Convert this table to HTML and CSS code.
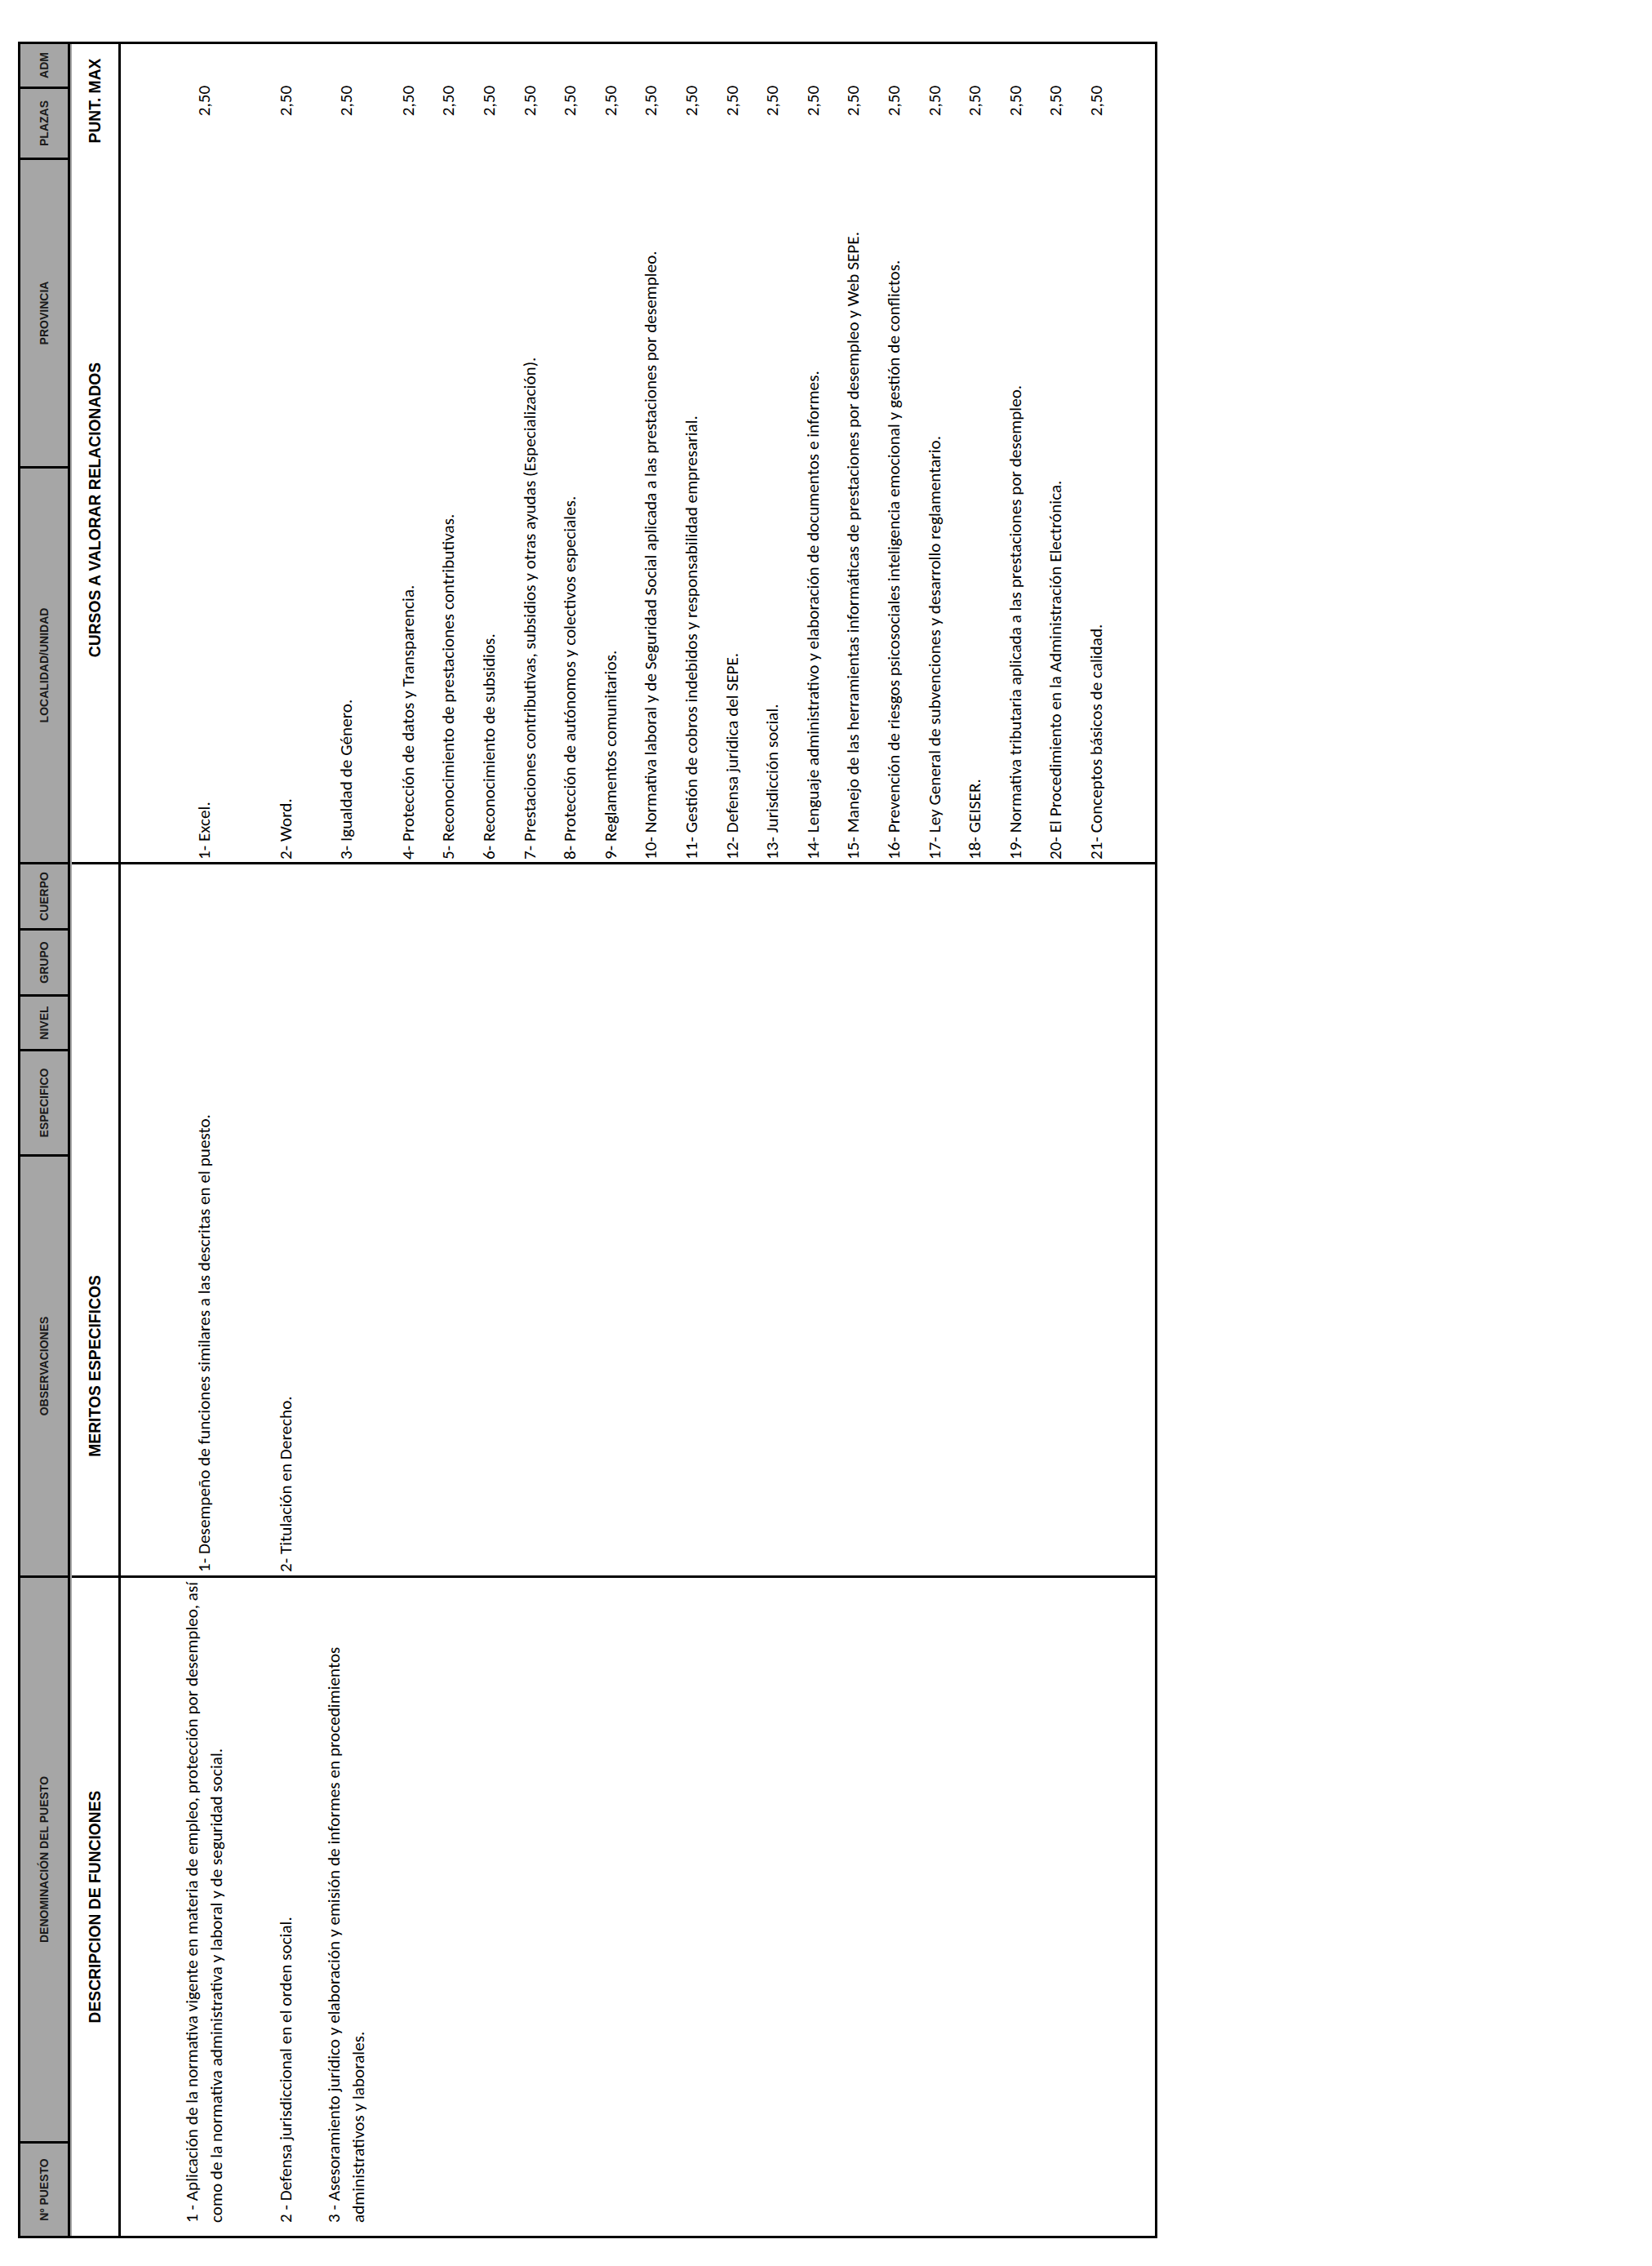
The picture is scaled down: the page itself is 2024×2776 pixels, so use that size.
FILE: index.html
```html
<!DOCTYPE html>
<html lang="es">
<head>
<meta charset="utf-8">
<title>Descripción de funciones</title>
<link rel="stylesheet" href="styles.css">
</head>
<body>
<div class="page">
<div class="sheet">
  <div class="hdr">
    <div class="hc c-num">Nº PUESTO</div>
    <div class="hc c-den">DENOMINACIÓN DEL PUESTO</div>
    <div class="hc c-obs">OBSERVACIONES</div>
    <div class="hc c-esp">ESPECIFICO</div>
    <div class="hc c-niv">NIVEL</div>
    <div class="hc c-gru">GRUPO</div>
    <div class="hc c-cue">CUERPO</div>
    <div class="hc c-loc">LOCALIDAD/UNIDAD</div>
    <div class="hc c-pro">PROVINCIA</div>
    <div class="hc c-pla">PLAZAS</div>
    <div class="hc c-adm">ADM</div>
  </div>
  <div class="titles">
    <div class="tc ta">DESCRIPCION DE FUNCIONES</div>
    <div class="tc tb">MERITOS ESPECIFICOS</div>
    <div class="tc tcur">CURSOS A VALORAR RELACIONADOS</div>
    <div class="tc td">PUNT. MAX</div>
  </div>
  <div class="rows">
    <div class="cell ca first"><div class="multi">1 - Aplicación de la normativa vigente en materia de empleo, protección por desempleo, así<br>como de la normativa administrativa y laboral y de seguridad social.</div></div>
    <div class="cell cb first">1- Desempeño de funciones similares a las descritas en el puesto.</div>
    <div class="cell cc first">1- Excel.</div>
    <div class="cell cd first">2,50</div>

    <div class="cell ca">2 - Defensa jurisdiccional en el orden social.</div>
    <div class="cell cb">2- Titulación en Derecho.</div>
    <div class="cell cc">2- Word.</div>
    <div class="cell cd">2,50</div>

    <div class="cell ca"><div class="multi">3 - Asesoramiento jurídico y elaboración y emisión de informes en procedimientos<br>administrativos y laborales.</div></div>
    <div class="cell cb"></div>
    <div class="cell cc">3- Igualdad de Género.</div>
    <div class="cell cd">2,50</div>

    <div class="cell ca"></div><div class="cell cb"></div>
    <div class="cell cc">4- Protección de datos y Transparencia.</div>
    <div class="cell cd">2,50</div>

    <div class="cell ca"></div><div class="cell cb"></div>
    <div class="cell cc">5- Reconocimiento de prestaciones contributivas.</div>
    <div class="cell cd">2,50</div>

    <div class="cell ca"></div><div class="cell cb"></div>
    <div class="cell cc">6- Reconocimiento de subsidios.</div>
    <div class="cell cd">2,50</div>

    <div class="cell ca"></div><div class="cell cb"></div>
    <div class="cell cc">7- Prestaciones contributivas, subsidios y otras ayudas (Especialización).</div>
    <div class="cell cd">2,50</div>

    <div class="cell ca"></div><div class="cell cb"></div>
    <div class="cell cc">8- Protección de autónomos y colectivos especiales.</div>
    <div class="cell cd">2,50</div>

    <div class="cell ca"></div><div class="cell cb"></div>
    <div class="cell cc">9- Reglamentos comunitarios.</div>
    <div class="cell cd">2,50</div>

    <div class="cell ca"></div><div class="cell cb"></div>
    <div class="cell cc">10- Normativa laboral y de Seguridad Social aplicada a las prestaciones por desempleo.</div>
    <div class="cell cd">2,50</div>

    <div class="cell ca"></div><div class="cell cb"></div>
    <div class="cell cc">11- Gestión de cobros indebidos y responsabilidad empresarial.</div>
    <div class="cell cd">2,50</div>

    <div class="cell ca"></div><div class="cell cb"></div>
    <div class="cell cc">12- Defensa jurídica del SEPE.</div>
    <div class="cell cd">2,50</div>

    <div class="cell ca"></div><div class="cell cb"></div>
    <div class="cell cc">13- Jurisdicción social.</div>
    <div class="cell cd">2,50</div>

    <div class="cell ca"></div><div class="cell cb"></div>
    <div class="cell cc">14- Lenguaje administrativo y elaboración de documentos e informes.</div>
    <div class="cell cd">2,50</div>

    <div class="cell ca"></div><div class="cell cb"></div>
    <div class="cell cc">15- Manejo de las herramientas informáticas de prestaciones por desempleo y Web SEPE.</div>
    <div class="cell cd">2,50</div>

    <div class="cell ca"></div><div class="cell cb"></div>
    <div class="cell cc">16- Prevención de riesgos psicosociales inteligencia emocional y gestión de conflictos.</div>
    <div class="cell cd">2,50</div>

    <div class="cell ca"></div><div class="cell cb"></div>
    <div class="cell cc">17- Ley General de subvenciones y desarrollo reglamentario.</div>
    <div class="cell cd">2,50</div>

    <div class="cell ca"></div><div class="cell cb"></div>
    <div class="cell cc">18- GEISER.</div>
    <div class="cell cd">2,50</div>

    <div class="cell ca"></div><div class="cell cb"></div>
    <div class="cell cc">19- Normativa tributaria aplicada a las prestaciones por desempleo.</div>
    <div class="cell cd">2,50</div>

    <div class="cell ca"></div><div class="cell cb"></div>
    <div class="cell cc">20- El Procedimiento en la Administración Electrónica.</div>
    <div class="cell cd">2,50</div>

    <div class="cell ca"></div><div class="cell cb"></div>
    <div class="cell cc">21- Conceptos básicos de calidad.</div>
    <div class="cell cd">2,50</div>

    <div class="cell ca"></div><div class="cell cb"></div>
    <div class="cell cc"></div>
    <div class="cell cd"></div>
  </div>
</div>
</div>
</body>
</html>
```
FILE: styles.css
```css
html {
  overflow: hidden;
  background: #ffffff;
}
body {
  margin: 0;
  padding: 0;
}

/* Footprint of the landscape sheet once turned on the portrait page. */
.page {
  width: 2024px;
  height: 2776px;
}

/* The printed sheet is laid out upright, then turned a quarter-turn
   counter-clockwise, as in the scanned landscape page. */
.sheet {
  box-sizing: border-box;
  width: 2691px;
  height: 1396px;
  border: 3px solid #000;
  transform-origin: 0 0;
  transform: translate(22px, 2742px) rotate(-90deg);
  color: #000;
}

/* ---------- grey header row ---------- */
.hdr {
  box-sizing: border-box;
  display: flex;
  height: 61px;
  background: #a6a6a6;
  border-bottom: 3px solid #000;
}
.hc {
  box-sizing: border-box;
  display: flex;
  align-items: center;
  justify-content: center;
  border-right: 3px solid #000;
  font-family: "Liberation Sans", Arial, sans-serif;
  font-weight: 700;
  font-size: 14px;
  color: #1a1a1a;
  white-space: nowrap;
}
.c-num { width: 116px; }
.c-den { width: 693px; }
.c-obs { width: 516px; }
.c-esp { width: 129px; }
.c-niv { width: 67px; }
.c-gru { width: 81px; }
.c-cue { width: 81px; }
.c-loc { width: 485px; }
.c-pro { width: 378px; }
.c-pla { width: 87px; }
.c-adm { width: 52px; border-right: 0; }

/* ---------- section titles ---------- */
.titles,
.rows {
  display: grid;
  grid-template-columns: 809px 874px 863px 139px;
}
.titles {
  box-sizing: border-box;
  height: 62px;
  border-top: 2px solid #a6a6a6;
  border-bottom: 3px solid #000;
}
.tc {
  box-sizing: border-box;
  display: flex;
  align-items: center;
  justify-content: center;
  font-family: "Liberation Sans", Arial, sans-serif;
  font-weight: 700;
  font-size: 19.3px;
  white-space: nowrap;
}
.ta { border-right: 3px solid #000; }
.tb { border-right: 3px solid #000; padding-right: 358px; }

/* ---------- body rows ---------- */
.rows {
  height: 1267px;
  grid-template-rows: 180px 44.6px 102.4px repeat(18, 49.6px) 1fr;
}
.cell {
  box-sizing: border-box;
  display: flex;
  align-items: center;
  min-width: 0;
  font-family: Carlito, Calibri, Lato, sans-serif;
  font-size: 21.2px;
  line-height: 30px;
  white-space: nowrap;
}
.ca { border-right: 3px solid #000; padding-left: 16px; }
.cb { border-right: 3px solid #000; padding-left: 4px; }
.cc { padding-left: 3px; }
.cd { justify-content: center; }
.first { padding-top: 23.6px; }
.multi { line-height: 30px; }
```
